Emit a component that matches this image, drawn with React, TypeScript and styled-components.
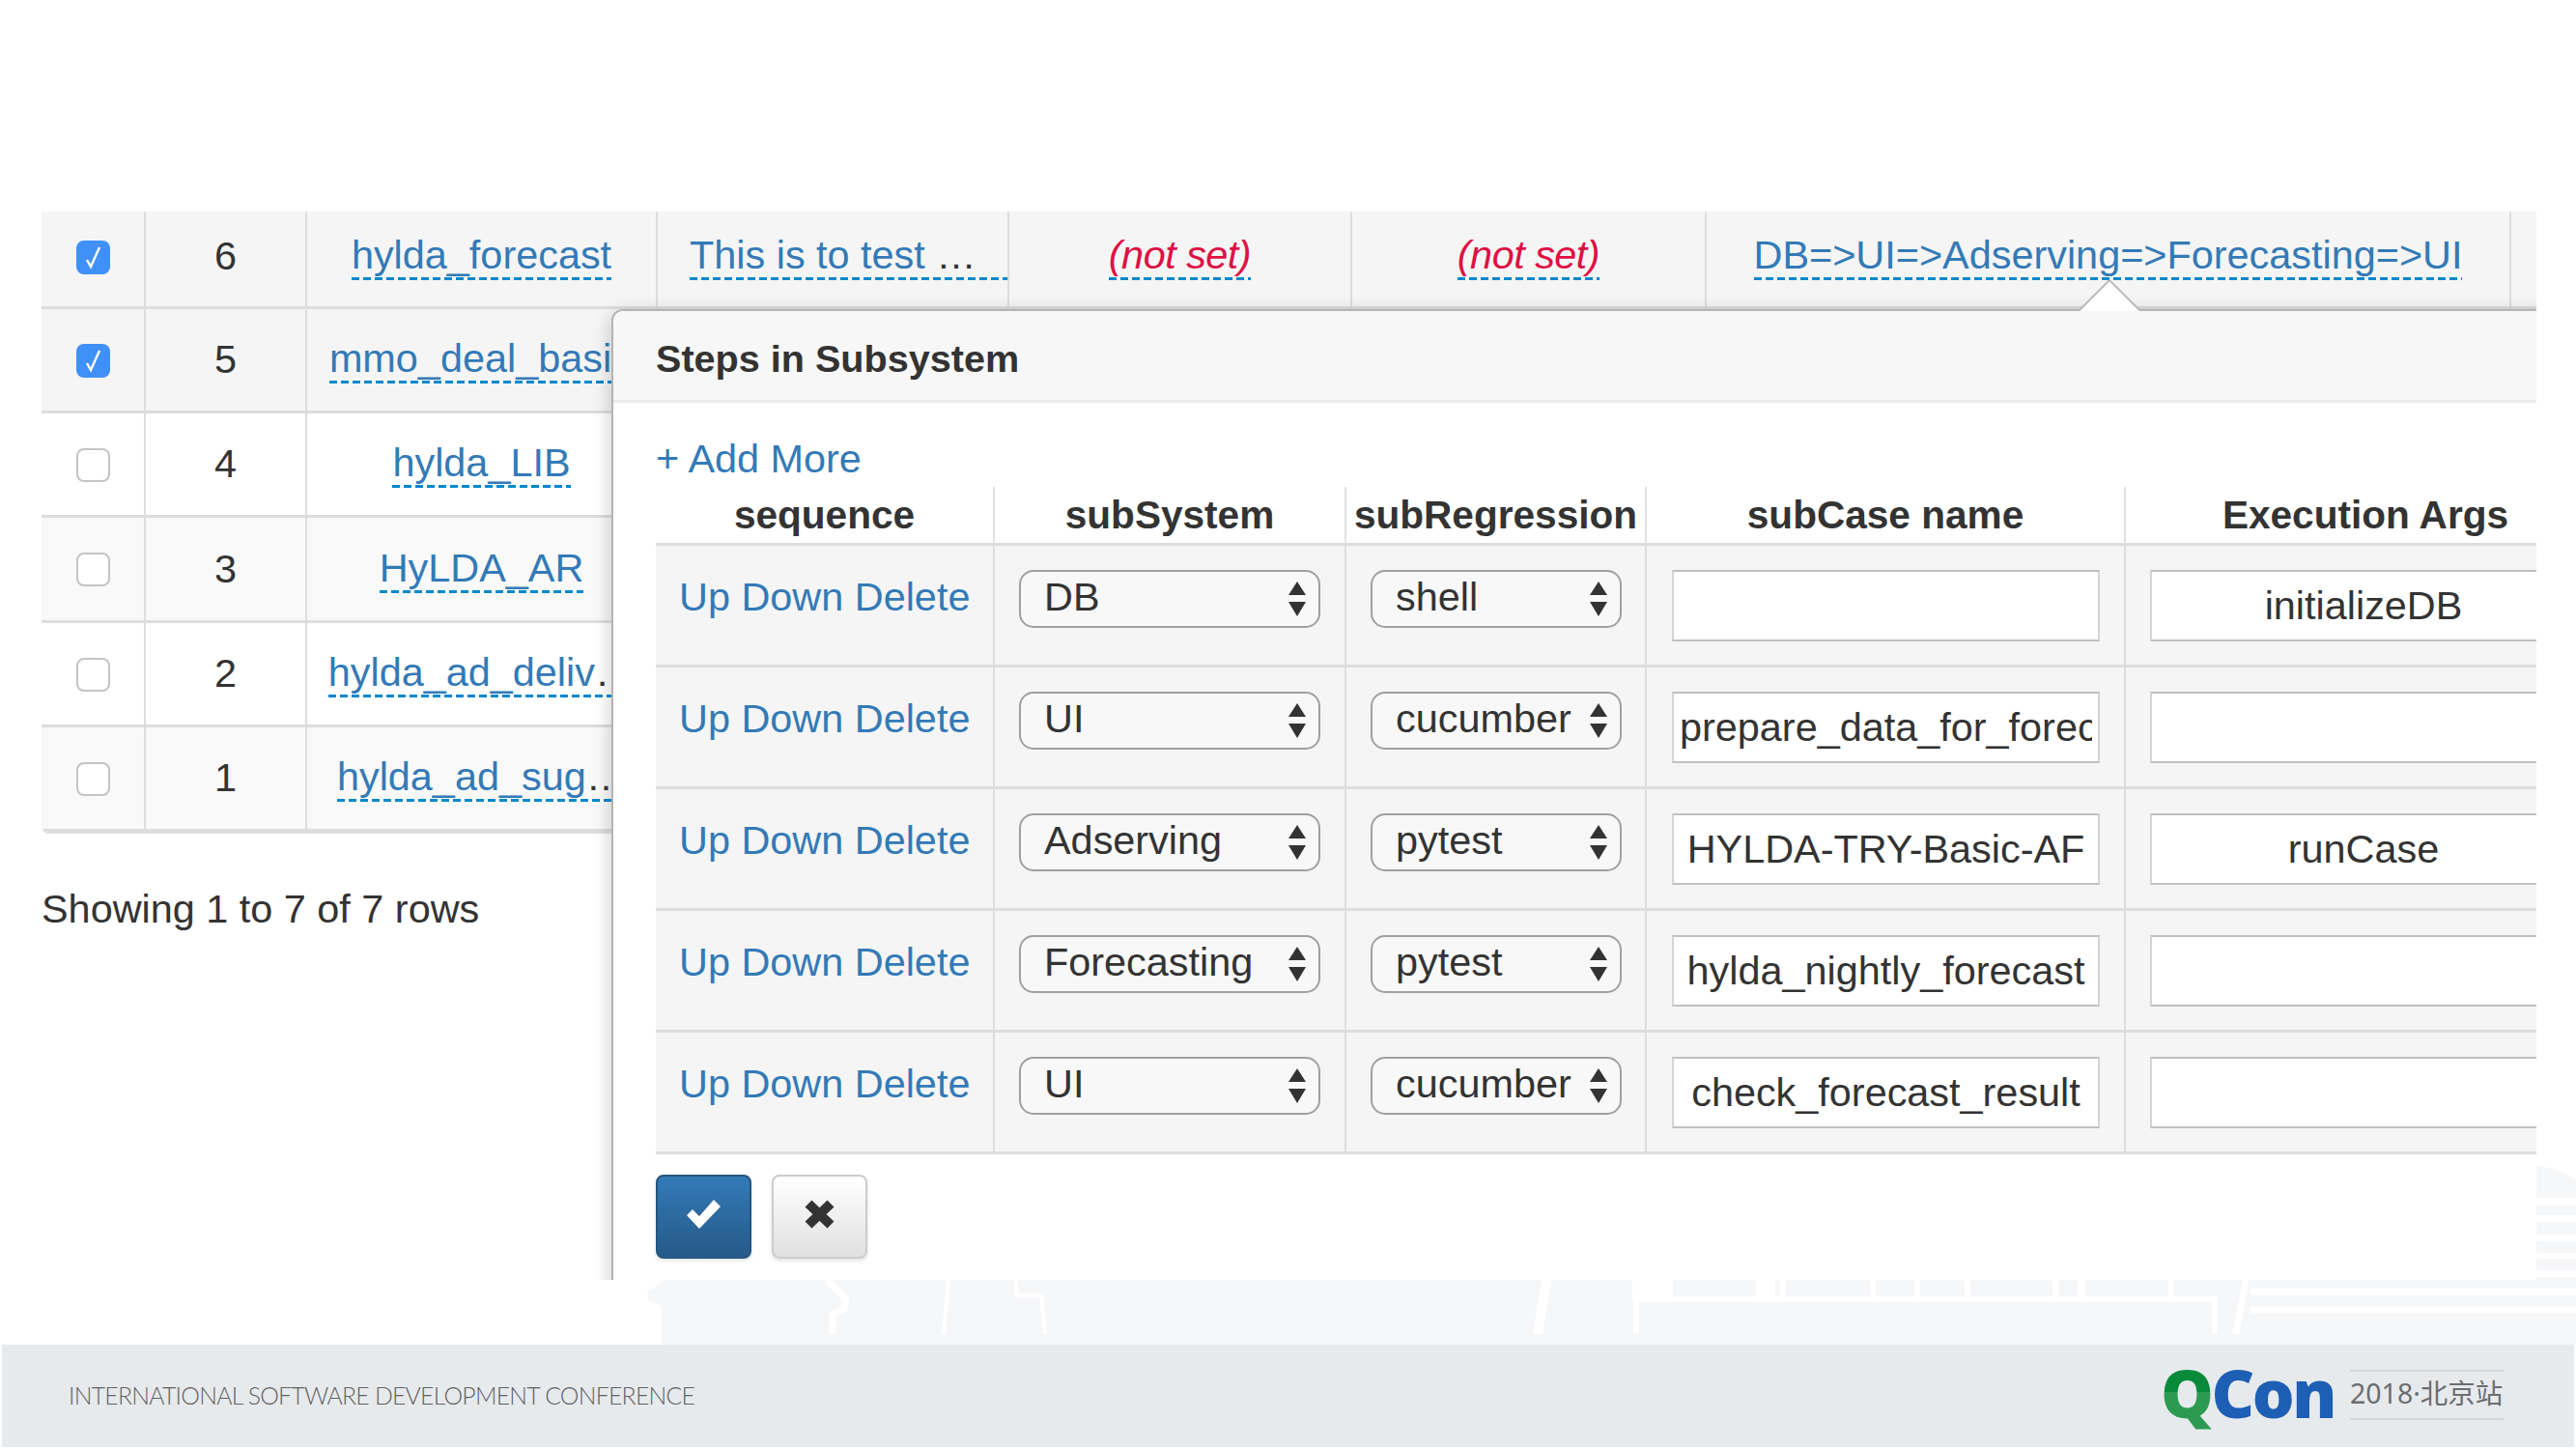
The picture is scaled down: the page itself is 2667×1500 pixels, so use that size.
import React from "react";
import styled, { createGlobalStyle } from "styled-components";

const Global = createGlobalStyle`
  html, body { margin: 0; padding: 0; background: #fff; }
  body { width: 2667px; height: 1500px; overflow: hidden; font-family: "Liberation Sans", Arial, sans-serif; color: #333; }
  * { box-sizing: border-box; }
`;

const FONT = "41.4px";

const Slide = styled.div`
  position: relative;
  width: 2667px;
  height: 1500px;
  padding-top: 219px;
  background: #fff;
`;
const Backdrop = styled.svg`
  position: absolute;
  left: 0;
  top: 0;
  width: 2667px;
  height: 1500px;
`;
const Stage = styled.div`
  position: relative;
  margin-left: 43px;
  width: 2583px;
  height: 1106px;
  overflow: hidden;
  background: #fff;
`;
const DataTable = styled.table`
  width: 2583px;
  table-layout: fixed;
  border-collapse: separate;
  border-spacing: 0;
  font-size: ${FONT};
  border-bottom: 2px solid #ddd;
  border-bottom-left-radius: 8px;
  overflow: hidden;
`;
const DataRow = styled.tr<{ $bg: string; $h: number }>`
  height: ${(p) => p.$h}px;
  background: ${(p) => p.$bg};
  & > td {
    height: ${(p) => p.$h}px;
    border-bottom: 3px solid #ddd;
  }
`;
const DataCell = styled.td<{ $left?: boolean; $lift?: number }>`
  padding: 0 0 ${(p) => p.$lift ?? 0}px ${(p) => (p.$left ? "33px" : "0")};
  border-right: 2px solid #ddd;
  text-align: ${(p) => (p.$left ? "left" : "center")};
  vertical-align: middle;
  white-space: nowrap;
  overflow: hidden;
  &:last-child { border-right: 0; }
`;
const Editable = styled.a<{ $empty?: boolean; $fill?: boolean }>`
  display: ${(p) => (p.$fill ? "block" : "inline-block")};
  color: ${(p) => (p.$empty ? "#dd1144" : "#337ab7")};
  font-style: ${(p) => (p.$empty ? "italic" : "normal")};
  letter-spacing: ${(p) => (p.$empty ? "-0.5px" : "0")};
  padding-bottom: 3px;
  background: repeating-linear-gradient(90deg, #0088cc 0 8px, transparent 8px 12px) left bottom / 100% 3px no-repeat;
  line-height: 46px;
  text-decoration: none;
`;
const Dots = styled.span`
  color: #333;
`;
const Check = styled.span<{ $on?: boolean }>`
  display: inline-flex;
  align-items: center;
  justify-content: center;
  width: 35px;
  height: 35px;
  margin-bottom: 4px;
  border-radius: 8px;
  vertical-align: middle;
  background: ${(p) => (p.$on ? "#3f90f7" : "#fff")};
  border: ${(p) => (p.$on ? "0" : "2px solid #c4c4c4")};
`;
const Summary = styled.div`
  margin-top: 50px;
  font-size: ${FONT};
  line-height: 56px;
  color: #333;
`;
const Popover = styled.div`
  position: absolute;
  left: 590px;
  top: 101px;
  width: 2200px;
  height: 1040px;
  background: #fff;
  border: 2px solid #b4b4b4;
  border-radius: 12px;
  box-shadow: 0 5px 20px rgba(0, 0, 0, 0.22);
`;
const Notch = styled.svg`
  position: absolute;
  left: 2108px;
  top: 71px;
  width: 66px;
  height: 32px;
`;
const PopTitle = styled.h3`
  margin: 0;
  height: 95px;
  padding-left: 44px;
  background: #f7f7f7;
  border-bottom: 3px solid #ebebeb;
  border-radius: 10px 10px 0 0;
  font-size: 39.6px;
  line-height: 98px;
  font-weight: 700;
  color: #333;
`;
const PopBody = styled.div`
  padding-left: 44px;
`;
const AddMore = styled.a`
  display: block;
  height: 87px;
  font-size: ${FONT};
  line-height: 116px;
  color: #337ab7;
`;
const StepsTable = styled.table`
  width: 2016px;
  table-layout: fixed;
  border-collapse: separate;
  border-spacing: 0;
  font-size: ${FONT};
`;
const HeadCell = styled.th`
  height: 61px;
  padding: 0;
  font-size: 40.6px;
  font-weight: 700;
  text-align: center;
  color: #333;
  border-bottom: 3px solid #ddd;
  border-right: 2px solid #e2e2e2;
  white-space: nowrap;
  &:last-child { border-right: 0; }
`;
const StepRow = styled.tr`
  height: 126px;
  background: #f5f5f5;
`;
const StepCell = styled.td<{ $left?: number }>`
  height: 126px;
  padding: 25px 0 0 ${(p) => p.$left ?? 0}px;
  vertical-align: top;
  border-bottom: 3px solid #ddd;
  border-right: 2px solid #ddd;
  &:last-child { border-right: 0; }
`;
const Actions = styled.div`
  display: flex;
  gap: 11.5px;
  line-height: 56px;
  white-space: nowrap;
`;
const ActionLink = styled.a`
  color: #337ab7;
`;
const SelectBox = styled.div<{ $w: number }>`
  display: flex;
  align-items: center;
  justify-content: space-between;
  width: ${(p) => p.$w}px;
  height: 60px;
  padding: 0 13px 0 24px;
  background: #f8f8f8;
  border: 2px solid #a0a0a0;
  border-radius: 15px;
  color: #333;
`;
const SelectLabel = styled.span`
  padding-bottom: 4px;
`;
const Field = styled.input<{ $w: number }>`
  display: block;
  width: ${(p) => p.$w}px;
  height: 74px;
  padding: 0 6px;
  background: #fff;
  border: 2px solid #d4d4d4;
  border-bottom-color: #c0c0c0;
  border-top-color: #c0c0c0;
  border-radius: 0;
  font: 400 ${FONT} "Liberation Sans", Arial, sans-serif;
  color: #333;
  text-align: center;
  outline: none;
`;
const Buttons = styled.div`
  display: flex;
  gap: 21px;
  margin-top: 21px;
`;
const IconButton = styled.button<{ $primary?: boolean }>`
  display: flex;
  align-items: center;
  justify-content: center;
  width: 99px;
  height: 87px;
  padding: 0 0 5px;
  border-radius: 8px;
  border: 2px solid ${(p) => (p.$primary ? "#245580" : "#ccc")};
  background: ${(p) =>
    p.$primary ? "linear-gradient(#337ab7, #265a88)" : "linear-gradient(#fff, #e0e0e0)"};
  box-shadow: 0 2px 4px rgba(0, 0, 0, 0.12);
`;
const Footer = styled.footer`
  position: relative;
  display: flex;
  align-items: center;
  justify-content: space-between;
  height: 106px;
  margin: 67px 2px 0 2px;
  padding: 0 73px 2px 69px;
  background: #e7eaed;
`;
const Tagline = styled.span`
  font-family: Lato, "Liberation Sans", sans-serif;
  font-weight: 300;
  font-size: 24.8px;
  letter-spacing: -0.75px;
  color: #5f6265;
`;
const Brand = styled.div`
  display: flex;
  align-items: center;
  gap: 16px;
`;
const BrandWord = styled.span`
  font-family: "Open Sans", sans-serif;
  font-weight: 800;
  font-size: 69px;
  line-height: 60px;
  letter-spacing: -2.5px;
  color: #1d5fb4;
  padding-bottom: 6px;
`;
const BrandQ = styled.span`
  background: linear-gradient(#078a3a 50%, #2c9a50 50%);
  -webkit-background-clip: text;
  background-clip: text;
  color: transparent;
`;
const Edition = styled.span`
  display: block;
  width: 159px;
  height: 52px;
  border-top: 2px solid #d3d6da;
  border-bottom: 2px solid #d3d6da;
  font-family: "Noto Sans", "Noto Sans CJK SC", sans-serif;
  font-size: 28.5px;
  line-height: 45px;
  color: #6b6e71;
  white-space: nowrap;
`;

const Tick = () => (
  <svg width="19" height="28" viewBox="0 0 19 28">
    <path d="M3 17 L7 24 L16 4" fill="none" stroke="#fff" strokeWidth="2.4" />
  </svg>
);
const UpDown = () => (
  <svg width="18" height="36" viewBox="0 0 18 36">
    <path d="M9 0 L18 14 H0 Z M0 21 H18 L9 36 Z" fill="#333" />
  </svg>
);
const OkIcon = () => (
  <svg width="35" height="30" viewBox="0 0 35 30">
    <path d="M0 16 L6 10 L13 17 L28 0 L35 7 L13 30 Z" fill="#fff" />
  </svg>
);
const CrossIcon = () => (
  <svg width="31" height="30" viewBox="0 0 31 30">
    <path d="M4 4 L27 26 M27 4 L4 26" stroke="#333" strokeWidth="10" fill="none" />
  </svg>
);

const rows = [
  { id: 6, name: "hylda_forecast", cut: "", on: true, bg: "#f5f5f5", h: 101, lift: 5 },
  { id: 5, name: "mmo_deal_basi", cut: "..", on: true, bg: "#f5f5f5", h: 108 },
  { id: 4, name: "hylda_LIB", cut: "", on: false, bg: "#fff", h: 108 },
  { id: 3, name: "HyLDA_AR", cut: "", on: false, bg: "#f9f9f9", h: 109 },
  { id: 2, name: "hylda_ad_deliv", cut: "…", on: false, bg: "#fff", h: 108 },
  { id: 1, name: "hylda_ad_sug", cut: "…", on: false, bg: "#f9f9f9", h: 108 },
];
const steps = [
  { sys: "DB", reg: "shell", name: "", args: "initializeDB" },
  { sys: "UI", reg: "cucumber", name: "prepare_data_for_forecast", args: "" },
  { sys: "Adserving", reg: "pytest", name: "HYLDA-TRY-Basic-AF", args: "runCase" },
  { sys: "Forecasting", reg: "pytest", name: "hylda_nightly_forecast", args: "" },
  { sys: "UI", reg: "cucumber", name: "check_forecast_result", args: "" },
];

export default function App() {
  return (
    <Slide>
      <Global />
      <Backdrop viewBox="0 0 2667 1500">
        <g fill="#f6f7f9">
          <path d="M685 1392 V1352 L672 1347 L670 1338 L688 1325 H2667 V1392 Z" />
          <path d="M2626 1207 C2645 1209 2657 1214 2667 1222 V1240 H2626 Z" />
          <rect x="2626" y="1248" width="41" height="10" />
          <rect x="2626" y="1265" width="41" height="13" />
          <rect x="2626" y="1285" width="41" height="12" />
          <rect x="2626" y="1303" width="41" height="12" />
          <rect x="2626" y="1322" width="41" height="8" />
        </g>
        <g fill="none" stroke="#fff" strokeWidth="4">
          <path d="M856 1325 L876 1345 L874 1355 L862 1360 V1381" strokeWidth="7" />
          <path d="M982 1325 L977 1381" />
          <path d="M1052 1325 V1341 H1078 L1082 1381" />
          <path d="M1601 1325 L1592 1381" strokeWidth="10" />
          <path d="M1694 1381 V1345 H2293 V1381" strokeWidth="6" />
          <path d="M2325 1325 L2315 1381" strokeWidth="7" />
          <path d="M2330 1337 H2667 M2330 1356 H2667" strokeWidth="7" />
        </g>
        <g fill="#fff">
          <rect x="1690" y="1325" width="42" height="20" />
          <rect x="1818" y="1325" width="20" height="20" />
          <rect x="1843" y="1325" width="6" height="20" />
          <rect x="1936" y="1325" width="6" height="20" />
          <rect x="1982" y="1325" width="6" height="20" />
          <rect x="2034" y="1325" width="6" height="20" />
          <rect x="2125" y="1325" width="7" height="20" />
          <rect x="2151" y="1325" width="8" height="20" />
          <rect x="2245" y="1325" width="6" height="20" />
        </g>
      </Backdrop>
      <Stage>
        <DataTable>
          <colgroup>
            <col width="108" />
            <col width="167" />
            <col width="363" />
            <col width="364" />
            <col width="355" />
            <col width="367" />
            <col width="833" />
            <col width="26" />
          </colgroup>
          <tbody>
            {rows.map((r) => (
              <DataRow key={r.id} $bg={r.bg} $h={r.h}>
                <DataCell $lift={r.lift}>
                  <Check $on={r.on}>{r.on && <Tick />}</Check>
                </DataCell>
                <DataCell $lift={r.lift}>{r.id}</DataCell>
                <DataCell $lift={r.lift}>
                  <Editable>
                    {r.name}
                    {r.cut && <Dots>{r.cut}</Dots>}
                  </Editable>
                </DataCell>
                {r.id === 6 ? (
                  <>
                    <DataCell $left $lift={r.lift}>
                      <Editable $fill>
                        This is to test <Dots>…</Dots>
                      </Editable>
                    </DataCell>
                    <DataCell $lift={r.lift}>
                      <Editable $empty>(not set)</Editable>
                    </DataCell>
                    <DataCell $lift={r.lift}>
                      <Editable $empty>(not set)</Editable>
                    </DataCell>
                    <DataCell $lift={r.lift}>
                      <Editable>DB=&gt;UI=&gt;Adserving=&gt;Forecasting=&gt;UI</Editable>
                    </DataCell>
                    <DataCell />
                  </>
                ) : (
                  <>
                    <DataCell />
                    <DataCell />
                    <DataCell />
                    <DataCell />
                    <DataCell />
                  </>
                )}
              </DataRow>
            ))}
          </tbody>
        </DataTable>
        <Summary>Showing 1 to 7 of 7 rows</Summary>
        <Popover>
          <PopTitle>Steps in Subsystem</PopTitle>
          <PopBody>
            <AddMore>+ Add More</AddMore>
            <StepsTable>
              <colgroup>
                <col width="351" />
                <col width="364" />
                <col width="311" />
                <col width="496" />
                <col width="496" />
              </colgroup>
              <thead>
                <tr>
                  <HeadCell>sequence</HeadCell>
                  <HeadCell>subSystem</HeadCell>
                  <HeadCell>subRegression</HeadCell>
                  <HeadCell>subCase name</HeadCell>
                  <HeadCell>Execution Args</HeadCell>
                </tr>
              </thead>
              <tbody>
                {steps.map((s, i) => (
                  <StepRow key={i}>
                    <StepCell $left={24}>
                      <Actions>
                        <ActionLink>Up</ActionLink>
                        <ActionLink>Down</ActionLink>
                        <ActionLink>Delete</ActionLink>
                      </Actions>
                    </StepCell>
                    <StepCell $left={25}>
                      <SelectBox $w={312}>
                        <SelectLabel>{s.sys}</SelectLabel>
                        <UpDown />
                      </SelectBox>
                    </StepCell>
                    <StepCell $left={25}>
                      <SelectBox $w={260}>
                        <SelectLabel>{s.reg}</SelectLabel>
                        <UpDown />
                      </SelectBox>
                    </StepCell>
                    <StepCell $left={26}>
                      <Field $w={443} readOnly value={s.name} />
                    </StepCell>
                    <StepCell $left={25}>
                      <Field $w={442} readOnly value={s.args} />
                    </StepCell>
                  </StepRow>
                ))}
              </tbody>
            </StepsTable>
            <Buttons>
              <IconButton $primary>
                <OkIcon />
              </IconButton>
              <IconButton>
                <CrossIcon />
              </IconButton>
            </Buttons>
          </PopBody>
        </Popover>
        <Notch viewBox="0 0 66 32">
          <path d="M2 32 L33 0 L64 32 Z" fill="#fff" />
          <path d="M2 31 L33 0 L64 31" fill="none" stroke="#bcbcbc" strokeWidth="2" />
        </Notch>
      </Stage>
      <Footer>
        <Tagline>INTERNATIONAL SOFTWARE DEVELOPMENT CONFERENCE</Tagline>
        <Brand>
          <BrandWord>
            <BrandQ>Q</BrandQ>Con
          </BrandWord>
          <Edition>2018·北京站</Edition>
        </Brand>
      </Footer>
    </Slide>
  );
}
